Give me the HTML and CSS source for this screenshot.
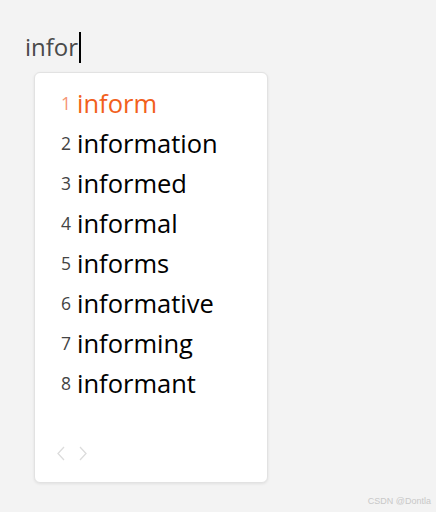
FILE: index.html
```html
<!DOCTYPE html>
<html>
<head>
<meta charset="utf-8">
<link rel="stylesheet" href="styles.css">
</head>
<body>
<div class="page">
  <div class="input"><span class="typed">infor</span><span class="caret"></span></div>
  <div class="card">
    <ul class="list">
      <li class="row active"><span class="num">1</span><span class="word">inform</span></li>
      <li class="row"><span class="num">2</span><span class="word">information</span></li>
      <li class="row"><span class="num">3</span><span class="word">informed</span></li>
      <li class="row"><span class="num">4</span><span class="word">informal</span></li>
      <li class="row"><span class="num">5</span><span class="word">informs</span></li>
      <li class="row"><span class="num">6</span><span class="word">informative</span></li>
      <li class="row"><span class="num">7</span><span class="word">informing</span></li>
      <li class="row"><span class="num">8</span><span class="word">informant</span></li>
    </ul>
    <div class="pager">
      <svg width="10" height="15" viewBox="0 0 10 15"><path d="M8 1 L2 7.5 L8 14" fill="none" stroke="#dcdcdc" stroke-width="1.3"/></svg>
      <svg width="10" height="15" viewBox="0 0 10 15"><path d="M2 1 L8 7.5 L2 14" fill="none" stroke="#dcdcdc" stroke-width="1.3"/></svg>
    </div>
  </div>
  <div class="mark">CSDN @Dontla</div>
</div>
</body>
</html>
```

FILE: styles.css
```css
html, body {
  margin: 0;
  padding: 0;
  background: #f3f3f3;
}
.page {
  width: 436px;
  height: 512px;
  position: relative;
  font-family: "Open Sans", "Noto Sans", sans-serif;
  box-sizing: border-box;
  padding: 30px 0 0 25px;
}
.input {
  display: flex;
  align-items: center;
  height: 34px;
}
.typed {
  font-size: 24px;
  color: #4a4a4a;
  line-height: 34px;
}
.caret {
  display: inline-block;
  width: 2px;
  height: 31px;
  background: #000;
  margin-left: 1px;
}
.card {
  margin: 8px 0 0 9px;
  width: 234px;
  height: 411px;
  box-sizing: border-box;
  background: #fff;
  border: 1px solid #e2e2e2;
  border-radius: 6px;
  box-shadow: 0 1px 3px rgba(0,0,0,0.08);
  padding: 10px 0 0 26px;
  display: flex;
  flex-direction: column;
}
.list {
  list-style: none;
  margin: 0;
  padding: 0;
}
.row {
  display: flex;
  align-items: center;
  height: 40px;
}
.num {
  font-size: 17.5px;
  color: #444;
  margin-right: 6px;
}
.word {
  font-size: 25.5px;
  color: #000;
  line-height: 40px;
}
.active .num { color: #f59474; }
.active .word { color: #f2601c; }
.pager {
  display: flex;
  gap: 12px;
  margin-top: 43px;
  margin-left: -5px;
}
.mark {
  position: absolute;
  right: 5px;
  bottom: 6px;
  font-size: 9px;
  color: #c8c8c8;
  font-family: "Liberation Sans", sans-serif;
}
```
